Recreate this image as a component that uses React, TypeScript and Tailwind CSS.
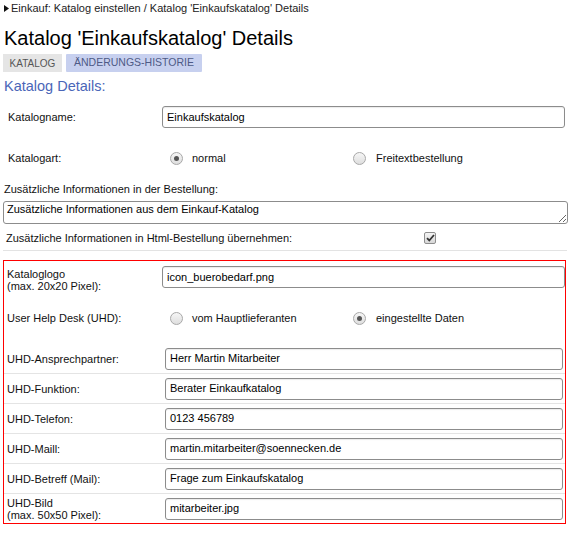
import React from "react";

function Radio({ checked }: { checked?: boolean }) {
  return (
    <span className="flex h-[13px] w-[13px] shrink-0 items-center justify-center rounded-full border border-[#a8a8a8] bg-gradient-to-b from-[#f6f6f6] to-[#dedede]">
      {checked && <span className="h-[5px] w-[5px] rounded-full bg-[#555]" />}
    </span>
  );
}

function RadioGroup({ a, b, aChecked }: { a: string; b: string; aChecked: boolean }) {
  return (
    <div className="flex items-center">
      <div className="flex w-[183px] items-center gap-[9px]">
        <Radio checked={aChecked} />
        <span>{a}</span>
      </div>
      <div className="flex items-center gap-[10px]">
        <Radio checked={!aChecked} />
        <span>{b}</span>
      </div>
    </div>
  );
}

function Input({ value, className = "" }: { value: string; className?: string }) {
  return (
    <div
      className={
        "flex h-[22px] shrink-0 items-center rounded-[3px] border border-[#8c8c8c] bg-white px-[4px] text-[11px] text-black shadow-[inset_0_1px_1px_rgba(0,0,0,0.08)] " +
        className
      }
    >
      {value}
    </div>
  );
}

function UhdRow({ label, value, last }: { label: React.ReactNode; value: string; last?: boolean }) {
  return (
    <div
      className={
        "box-border flex items-center " +
        (last ? "h-[29px]" : "h-[30px] border-b border-[#e4e4e4]")
      }
    >
      <div className="w-[161px] shrink-0 pl-[3px] leading-[12px]">{label}</div>
      <Input value={value} className="w-[398px]" />
    </div>
  );
}

export default function App() {
  return (
    <div className="h-[537px] w-[582px] overflow-hidden bg-white font-['Liberation_Sans',Arial,sans-serif] text-[11px] text-[#111]">
      {/* breadcrumb */}
      <div className="flex h-[16px] items-center pl-[4px] text-[#222]">
        <svg width="5" height="7" viewBox="0 0 5 7" className="mr-[2px]">
          <path d="M0 0 L5 3.5 L0 7 Z" fill="#111" />
        </svg>
        <span>Einkauf: Katalog einstellen / Katalog 'Einkaufskatalog' Details</span>
      </div>

      <h1 className="mt-[11px] pl-[4px] text-[20px] leading-[23px] text-black">
        Katalog 'Einkaufskatalog' Details
      </h1>

      {/* tabs */}
      <div className="mt-[4px] flex gap-[4px] pl-[3px]">
        <div className="flex h-[18px] w-[59px] items-center justify-center bg-[#e5e5e5] text-[10px] text-[#555]">
          KATALOG
        </div>
        <div className="flex h-[18px] w-[136px] items-center justify-center rounded-[1px] bg-[#c7d0ef] text-[10.5px] text-[#4e5a86]">
          ÄNDERUNGS-HISTORIE
        </div>
      </div>

      <div className="mt-[6px] pl-[4px] text-[14.5px] leading-[17px] text-[#4a66b8]">Katalog Details:</div>

      {/* Katalogname */}
      <div className="mt-[11px] flex items-center pl-[8px]">
        <div className="w-[154px] shrink-0">Katalogname:</div>
        <Input value="Einkaufskatalog" className="w-[403px]" />
      </div>

      {/* Katalogart */}
      <div className="mt-[19px] flex h-[22px] items-center pl-[8px]">
        <div className="w-[162px] shrink-0">Katalogart:</div>
        <RadioGroup a="normal" b="Freitextbestellung" aChecked />
      </div>

      <div className="mt-[13px] h-[14px] pl-[4px] leading-[14px]">Zusätzliche Informationen in der Bestellung:</div>

      <div className="ml-[3px] mt-[5px] w-[565px]">
        <textarea
          readOnly
          rows={1}
          defaultValue="Zusätzliche Informationen aus dem Einkauf-Katalog"
          className="block h-[23px] w-full resize-y rounded-[3px] border border-[#8c8c8c] px-[3px] py-[1px] font-['Liberation_Sans',Arial,sans-serif] text-[11px] leading-[13px] text-black outline-none"
        />
      </div>

      <div className="mt-[7px] flex h-[14px] items-center pl-[6px]">
        <div className="w-[418px] shrink-0">Zusätzliche Informationen in Html-Bestellung übernehmen:</div>
        <span className="flex h-[12px] w-[12px] items-center justify-center rounded-[2px] border border-[#8e8e8e] bg-gradient-to-b from-[#f4f4f4] to-[#d8d8d8]">
          <svg width="9" height="8" viewBox="0 0 9 8">
            <path d="M1 4.2 L3.3 6.5 L8 1" fill="none" stroke="#333" strokeWidth="1.8" />
          </svg>
        </span>
      </div>

      <div className="ml-[3px] mt-[5px] h-px w-[564px] bg-[#e3e3e3]" />

      {/* red box */}
      <div className="ml-[3px] mt-[9px] w-[563px] border border-[#ff0000]">
        <div className="flex h-[32px] items-start pt-[5px]">
          <div className="mt-[2px] w-[158px] shrink-0 pl-[3px] leading-[12px]">
            Kataloglogo
            <br />
            (max. 20x20 Pixel):
          </div>
          <Input value="icon_buerobedarf.png" className="w-[403px]" />
        </div>

        <div className="flex h-[51px] items-center">
          <div className="w-[166px] shrink-0 pl-[3px]">User Help Desk (UHD):</div>
          <RadioGroup a="vom Hauptlieferanten" b="eingestellte Daten" aChecked={false} />
        </div>

        <UhdRow label="UHD-Ansprechpartner:" value="Herr Martin Mitarbeiter" />
        <UhdRow label="UHD-Funktion:" value="Berater Einkaufkatalog" />
        <UhdRow label="UHD-Telefon:" value="0123 456789" />
        <UhdRow label="UHD-Maill:" value="martin.mitarbeiter@soennecken.de" />
        <UhdRow label="UHD-Betreff (Mail):" value="Frage zum Einkaufskatalog" />
        <UhdRow
          label={
            <>
              UHD-Bild
              <br />
              (max. 50x50 Pixel):
            </>
          }
          value="mitarbeiter.jpg"
          last
        />
      </div>
    </div>
  );
}
